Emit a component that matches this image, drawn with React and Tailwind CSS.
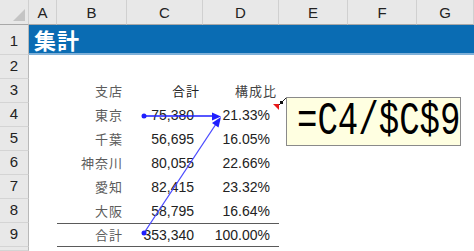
import React from 'react'

const cols = ['A', 'B', 'C', 'D', 'E', 'F', 'G']

const rows = [
  { branch: '支店', total: '合計', ratio: '構成比', head: true },
  { branch: '東京', total: '75,380', ratio: '21.33%' },
  { branch: '千葉', total: '56,695', ratio: '16.05%' },
  { branch: '神奈川', total: '80,055', ratio: '22.66%' },
  { branch: '愛知', total: '82,415', ratio: '23.32%' },
  { branch: '大阪', total: '58,795', ratio: '16.64%' },
  { branch: '合計', total: '353,340', ratio: '100.00%', sum: true },
]

const jp = { fontFamily: '"Noto Sans CJK JP", "Noto Sans", sans-serif' }
const num = { fontFamily: '"Liberation Sans", Arial, sans-serif' }

function RowHead({ n, h }) {
  return (
    <div
      className={`flex items-center justify-center bg-[#e8e8e8] border-r border-r-[#b8b8b8] border-b border-b-[#d4d4d4] text-[15px] text-[#222] ${h}`}
      style={num}
    >
      {n}
    </div>
  )
}

export default function App() {
  return (
    <div className="relative w-[474px] h-[251px] overflow-hidden bg-white">
      <div className="grid grid-cols-[29px_28px_70px_76px_76px_69px_69px_57px] grid-rows-[25px_30px_repeat(8,24px)_4px]">
        {/* column header */}
        <div className="relative bg-[#e8e8e8] border-r border-r-[#d0d0d0] border-b border-b-[#a8a8a8]">
          <div className="absolute right-[3px] bottom-[3px] w-0 h-0 border-l-[12px] border-l-transparent border-b-[12px] border-b-[#c4c4c4]" />
        </div>
        {cols.map(c => (
          <div
            key={c}
            className="flex items-center justify-center pt-[2px] bg-[#e8e8e8] border-r border-r-[#d0d0d0] border-b border-b-[#a8a8a8] text-[15px] text-[#222]"
            style={num}
          >
            {c}
          </div>
        ))}

        {/* row 1 */}
        <RowHead n={1} h="items-end pb-[2px]" />
        <div className="col-span-7 flex items-center bg-[#0a6cb3] border-b-2 border-b-[#7fb0d8] pl-[5px]">
          <span className="text-white text-[22px] font-bold tracking-[1px] leading-none" style={jp}>集計</span>
        </div>

        {/* row 2 */}
        <RowHead n={2} />
        <div className="col-span-7" />

        {rows.map((r, i) => (
          <React.Fragment key={i}>
            <RowHead n={i + 3} />
            <div />
            <div
              className={`flex items-center justify-end pr-[4px] text-[13px] tracking-[1px] text-[#5c5c5c] ${r.sum ? 'border-t border-t-[#5a5a5a] border-b border-b-[#5a5a5a]' : ''}`}
              style={jp}
            >
              {r.branch}
            </div>
            <div
              className={`flex items-center justify-end text-[#222] ${r.head ? 'pr-[3px] text-[13px] tracking-[1px] text-[#5c5c5c]' : 'pr-[9px] text-[14px]'} ${r.sum ? 'border-t border-t-[#5a5a5a] border-b border-b-[#5a5a5a]' : ''}`}
              style={r.head ? jp : num}
            >
              {r.total}
            </div>
            <div
              className={`relative flex items-center justify-end text-[#222] ${r.head ? 'pr-[2px] text-[13px] tracking-[1px] text-[#444]' : 'pr-[9px] text-[14px]'} ${r.sum ? 'border-t border-t-[#5a5a5a] border-b border-b-[#5a5a5a]' : ''}`}
              style={r.head ? jp : num}
            >
              {r.ratio}
              {i === 1 && (
                <div className="absolute top-[1px] right-0 w-0 h-0 border-l-[6px] border-l-transparent border-t-[6px] border-t-[#e81818]" />
              )}
            </div>
            <div />
            <div />
            <div />
          </React.Fragment>
        ))}

        <RowHead n="" />
        <div className="col-span-7" />
      </div>

      {/* trace precedents arrows + comment connector */}
      <svg className="absolute inset-0 pointer-events-none" width="474" height="251">
        <line x1="144" y1="116" x2="214" y2="116" stroke="#1f1fff" strokeWidth="1.3" />
        <polygon points="221,116.5 212,112.5 212,120.5" fill="#1f1fff" />
        <circle cx="144" cy="116" r="2.5" fill="#1f1fff" />
        <line x1="144" y1="233" x2="216" y2="124" stroke="#4a4aff" strokeWidth="1.3" />
        <polygon points="221,117 218.5,127.5 212,123" fill="#1f1fff" />
        <circle cx="144" cy="233" r="2.5" fill="#1f1fff" />
        <line x1="279" y1="105" x2="287" y2="97" stroke="#222" strokeWidth="1" />
        <rect x="280" y="101" width="3" height="3" fill="#111" />
      </svg>

      {/* comment box */}
      <div className="absolute left-[286px] top-[97px] w-[175px] h-[49px] bg-[#ffffe1] border border-[#8a8a8a] pl-[10px] pt-[1px]">
        <span
          className="inline-block origin-left scale-x-[0.74] text-[46px] leading-none text-black whitespace-nowrap"
          style={{ fontFamily: '"Liberation Mono", "DejaVu Sans Mono", monospace' }}
        >
          =C4/$C$9
        </span>
      </div>
    </div>
  )
}
